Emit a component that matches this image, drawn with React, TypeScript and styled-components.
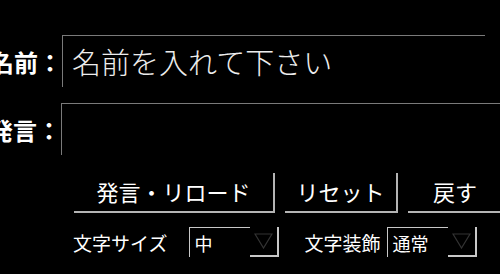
import React from 'react';
import styled, { createGlobalStyle } from 'styled-components';

const GlobalStyle = createGlobalStyle`
  html, body {
    margin: 0;
    padding: 0;
    background: #000;
    overflow: hidden;
  }
  body {
    font-family: 'Noto Sans CJK JP', 'Noto Sans', sans-serif;
    color: #fff;
  }
`;

function Select({ value }: { value: string }) {
  return (
    <SelectBox>
      <SelectValue>{value}</SelectValue>
      <SelectArrow>
        <svg width="19" height="16" viewBox="0 0 19 16">
          <polygon points="1,1 18,1 9.5,15" fill="none" stroke="#333" strokeWidth="1.2" />
        </svg>
      </SelectArrow>
    </SelectBox>
  );
}

export default function App() {
  return (
    <Root>
      <GlobalStyle />
      <FieldRow>
        <FieldLabel $width={62}>名前：</FieldLabel>
        <TextField $width={423} placeholder="名前を入れて下さい" />
      </FieldRow>
      <FieldRow>
        <FieldLabel $width={61}>発言：</FieldLabel>
        <TextField $width={439} />
      </FieldRow>
      <ButtonRow>
        <ActionButton $width={201}>発言・リロード</ActionButton>
        <ActionButton $width={113}>リセット</ActionButton>
        <ActionButton $width={96}>戻す</ActionButton>
      </ButtonRow>
      <OptionRow>
        <OptionLabel $before={0} $after={22}>文字サイズ</OptionLabel>
        <Select value="中" />
        <OptionLabel $before={25} $after={7}>文字装飾</OptionLabel>
        <Select value="通常" />
      </OptionRow>
    </Root>
  );
}

const Root = styled.div`
  width: 500px;
  height: 274px;
  padding-top: 35px;
  box-sizing: border-box;
  display: flex;
  flex-direction: column;
  overflow: hidden;
`;
const FieldRow = styled.div`
  display: flex;
  align-items: center;
  height: 52px;
  margin-bottom: 16px;
`;
const FieldLabel = styled.label<{ $width: number }>`
  flex: 0 0 ${p => p.$width}px;
  min-width: 0;
  display: flex;
  justify-content: flex-end;
  white-space: nowrap;
  font-size: 24px;
  font-weight: 700;
  line-height: 1;
  color: #fff;
  margin-top: 1px;
`;
const TextField = styled.input<{ $width: number }>`
  flex: 0 0 ${p => p.$width}px;
  min-width: 0;
  box-sizing: border-box;
  height: 52px;
  margin: 0;
  padding: 0 0 2px 9px;
  background: #000;
  border: none;
  border-top: 1px solid #7a7a7a;
  border-left: 1px solid #7a7a7a;
  outline: none;
  font-family: 'Noto Sans CJK JP', sans-serif;
  font-size: 29px;
  font-weight: 300;
  color: #f0f0f0;
  &::placeholder {
    color: #ededed;
  }
`;
const ButtonRow = styled.div`
  display: flex;
  gap: 10px;
  margin: 2px 0 0 74px;
`;
const ActionButton = styled.button<{ $width: number }>`
  flex: 0 0 ${p => p.$width}px;
  height: 40px;
  margin: 0;
  padding: 0 0 2px;
  background: #000;
  border: none;
  border-right: 2px solid #b4b4b4;
  border-bottom: 2px solid #b4b4b4;
  font-family: 'Noto Sans CJK JP', sans-serif;
  font-size: 22px;
  font-weight: 400;
  color: #fff;
  white-space: nowrap;
`;
const OptionRow = styled.div`
  display: flex;
  align-items: center;
  margin: 14px 0 0 73px;
`;
const OptionLabel = styled.span<{ $before: number; $after: number }>`
  margin: 0 ${p => p.$after}px 0 ${p => p.$before}px;
  font-size: 19px;
  font-weight: 400;
  color: #fff;
  white-space: nowrap;
`;
const SelectBox = styled.div`
  display: flex;
  width: 90px;
  height: 30px;
`;
const SelectValue = styled.div`
  flex: 1;
  display: flex;
  align-items: center;
  padding-left: 4px;
  border-top: 1px solid #c8c8c8;
  border-left: 1px solid #c8c8c8;
  font-size: 18px;
  font-weight: 400;
  color: #fff;
`;
const SelectArrow = styled.div`
  flex: 0 0 27px;
  display: flex;
  align-items: center;
  justify-content: center;
  border-right: 2px solid #c8c8c8;
  border-bottom: 2px solid #c8c8c8;
`;
